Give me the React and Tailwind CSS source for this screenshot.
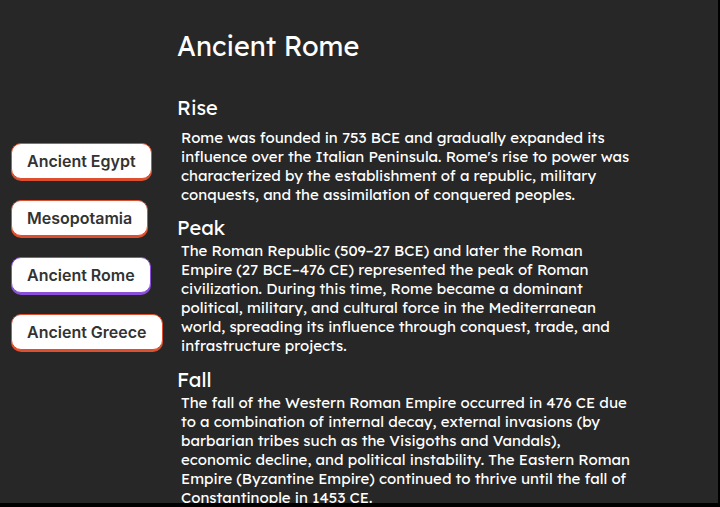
const civilizations = [
  { name: 'Ancient Egypt' },
  { name: 'Mesopotamia' },
  { name: 'Ancient Rome', active: true },
  { name: 'Ancient Greece' },
];

const sections = [
  {
    title: 'Rise',
    spacing: 'mt-8 mb-2',
    lines: [
      'Rome was founded in 753 BCE and gradually expanded its',
      "influence over the Italian Peninsula. Rome's rise to power was",
      'characterized by the establishment of a republic, military',
      'conquests, and the assimilation of conquered peoples.',
    ],
  },
  {
    title: 'Peak',
    spacing: 'mt-3 mb-px',
    lines: [
      'The Roman Republic (509–27 BCE) and later the Roman',
      'Empire (27 BCE–476 CE) represented the peak of Roman',
      'civilization. During this time, Rome became a dominant',
      'political, military, and cultural force in the Mediterranean',
      'world, spreading its influence through conquest, trade, and',
      'infrastructure projects.',
    ],
  },
  {
    title: 'Fall',
    spacing: 'mt-[13px] mb-px',
    lines: [
      'The fall of the Western Roman Empire occurred in 476 CE due',
      'to a combination of internal decay, external invasions (by',
      'barbarian tribes such as the Visigoths and Vandals),',
      'economic decline, and political instability. The Eastern Roman',
      'Empire (Byzantine Empire) continued to thrive until the fall of',
      'Constantinople in 1453 CE.',
    ],
  },
];

function CivilizationButton({ name, active }) {
  return (
    <button
      type="button"
      aria-pressed={Boolean(active)}
      className={`h-9 rounded-[10px] border bg-white px-[15px] font-['Inter',sans-serif] text-base font-semibold whitespace-nowrap text-[#333333] ${
        active
          ? 'border-[#8a4fd8] shadow-[0_2px_0_#8a4fd8]'
          : 'border-[#dd4f2e] shadow-[0_2px_0_#dd4f2e]'
      }`}
    >
      {name}
    </button>
  );
}

export default function App() {
  return (
    <div className="h-screen overflow-hidden border-r-2 border-b-4 border-black bg-[#272727] font-['Lexend','Inter',sans-serif] text-white">
      <div className="flex">
        <nav
          aria-label="Civilizations"
          className="flex w-[177px] shrink-0 flex-col items-start gap-[21px] pt-[143px] pl-[11px]"
        >
          {civilizations.map((c) => (
            <CivilizationButton key={c.name} {...c} />
          ))}
        </nav>
        <main className="min-w-0 flex-1 pt-7">
          <h1 className="text-[27px] leading-9">Ancient Rome</h1>
          {sections.map(({ title, spacing, lines }) => (
            <section key={title}>
              <h2 className={`text-xl leading-6 ${spacing}`}>{title}</h2>
              <p className="pl-1 text-[15px] leading-[19px] whitespace-nowrap">
                {lines.map((line) => (
                  <span key={line} className="block">
                    {line}
                  </span>
                ))}
              </p>
            </section>
          ))}
        </main>
      </div>
    </div>
  );
}
